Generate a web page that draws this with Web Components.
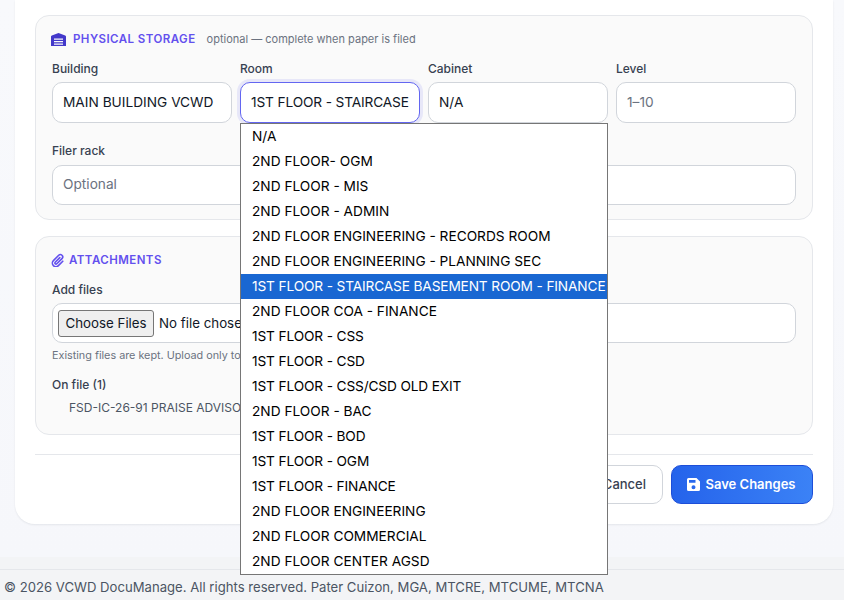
<!DOCTYPE html>
<html>
<head>
<meta charset="utf-8">
<title>Edit document</title>
<style>
  html, body { margin: 0; height: 600px; overflow: hidden; }
  body { font-family: Inter, "Liberation Sans", sans-serif; background: #f9fafb; }
</style>
</head>
<body>
<app-shell>
  <edit-card>
    <form-section heading="PHYSICAL STORAGE" note="optional — complete when paper is filed" icon="warehouse">
      <div style="display:grid;grid-template-columns:repeat(4,minmax(0,1fr));gap:8px;">
        <form-field label="Building" value="MAIN BUILDING VCWD"></form-field>
        <div style="position:relative">
          <form-field label="Room" value="1ST FLOOR - STAIRCASE" focused></form-field>
          <room-menu selected="6"></room-menu>
        </div>
        <form-field label="Cabinet" value="N/A"></form-field>
        <form-field label="Level" placeholder="1–10"></form-field>
      </div>
      <div style="margin-top:19px">
        <form-field label="Filer rack" placeholder="Optional" short></form-field>
      </div>
    </form-section>
    <form-section heading="ATTACHMENTS" icon="clip" style="margin-top:16px">
      <file-field label="Add files"></file-field>
      <div style="font-size:10.800px;color:#6b7280;margin-top:6px;line-height:14px;white-space:nowrap">Existing files are kept. Upload only to</div>
      <div style="font-size:12px;font-weight:500;color:#374151;margin-top:14px;line-height:16px">On file (1)</div>
      <div style="font-size:12px;color:#4b5563;margin:7px 0 4px 17px;line-height:16px;white-space:nowrap">FSD-IC-26-91 PRAISE ADVISO</div>
    </form-section>
    <form-actions></form-actions>
  </edit-card>
  <page-footer>© 2026 VCWD DocuManage. All rights reserved. Pater Cuizon, MGA, MTCRE, MTCUME, MTCNA</page-footer>
</app-shell>

<script>
const ICONS = {
  warehouse: `<svg width="15" height="13" viewBox="0 0 15 13"><path fill="#4338ca" fill-rule="evenodd" d="M7.500 0 .8 2.400C.3 2.600 0 3 0 3.500V13h15V3.500c0-.5-.3-.9-.8-1.100L7.500 0zM3 5.500h9v1.300H3zM3 8h9v1.300H3zM3 10.500h9v1.300H3z"/></svg>`,
  clip: `<svg width="13" height="14" viewBox="0 0 13 14" fill="none" stroke="#6350ee" stroke-width="1.600" stroke-linecap="round"><path d="M8.800 4.600 4.200 9.200a1.100 1.100 0 0 0 1.600 1.600L11 5.600a2.300 2.300 0 0 0-3.300-3.300L2.400 7.600a3.500 3.500 0 0 0 5 5L11.800 8.200"/></svg>`
};

// outer page, fills the window and keeps the footer at the bottom
class AppShell extends HTMLElement {
  constructor() {
    super();
    this.attachShadow({ mode: "open" }).innerHTML = `
      <style>
        :host { display: flex; flex-direction: column; height: 600px; }
        .main { flex: 1; min-height: 0; padding: 0 11px 0 15px; background: linear-gradient(#f8f9fc, #f6f7fb); }
        .strip { height: 12px; background: #f3f4f6; }
      </style>
      <div class="main"><slot></slot></div>
      <div class="strip"></div>
      <slot name="footer"></slot>`;
  }
  connectedCallback() {
    const f = this.querySelector("page-footer");
    if (f) f.slot = "footer";
  }
}

class EditCard extends HTMLElement {
  constructor() {
    super();
    this.attachShadow({ mode: "open" }).innerHTML = `
      <style>
        :host { display: block; background: #fff; border-radius: 0 0 20px 20px; padding: 15px 20px 20px; box-shadow: 0 1px 2px rgba(15,23,42,.08); }
      </style>
      <slot></slot>`;
  }
}

class FormSection extends HTMLElement {
  constructor() {
    super();
    const note = this.getAttribute("note");
    const icon = this.getAttribute("icon");
    this.attachShadow({ mode: "open" }).innerHTML = `
      <style>
        :host { display: block; background: #fafafa; border: 1px solid #e5e7eb; border-radius: 14px; padding: 15px 16px 14px; }
        .head { display: flex; align-items: center; height: 16px; margin-bottom: 13px; }
        .icon { display: flex; margin-right: ${icon === "clip" ? 5 : 7}px; margin-left: -1px; }
        .title { font-size: 11.500px; font-weight: 600; letter-spacing: .45px; color: #6350ee; }
        .note { font-size: 11px; color: #6b7280; margin-left: 11px; }
      </style>
      <div class="head">
        <span class="icon">${ICONS[icon] || ""}</span>
        <span class="title">${this.getAttribute("heading") || ""}</span>
        ${note ? `<span class="note">${note}</span>` : ""}
      </div>
      <slot></slot>`;
  }
}

class FormField extends HTMLElement {
  constructor() {
    super();
    const value = this.getAttribute("value");
    const focused = this.hasAttribute("focused");
    const short = this.hasAttribute("short");
    this.attachShadow({ mode: "open" }).innerHTML = `
      <style>
        :host { display: block; }
        label { display: block; font-size: 12px; font-weight: 500; color: #374151; line-height: 16px; padding-top: 1px; margin-bottom: ${short ? 6 : 5}px; }
        .box { box-sizing: border-box; height: ${short ? 40 : 41}px; display: flex; align-items: center; padding: 0 8px 2px 10px; background: #fff;
               border: 1px solid #d1d5db; border-radius: 10px; font-size: 13.700px; color: #111827; white-space: nowrap; }
        .box.focus { border-color: #6366f1; box-shadow: 0 0 0 3px rgba(99,102,241,.12); letter-spacing: -.14px; }
        .ph { color: #6b7280; }
      </style>
      <label>${this.getAttribute("label") || ""}</label>
      <div class="box ${focused ? "focus" : ""}">
        <span class="${value ? "" : "ph"}">${value || this.getAttribute("placeholder") || ""}</span>
      </div>`;
  }
}

class FileField extends HTMLElement {
  constructor() {
    super();
    this.attachShadow({ mode: "open" }).innerHTML = `
      <style>
        :host { display: block; }
        label { display: block; font-size: 12px; font-weight: 500; color: #374151; line-height: 16px; padding-top: 1px; margin-bottom: 5px; }
        .box { box-sizing: border-box; height: 40px; display: flex; align-items: center; padding: 0 5px; background: #fff;
               border: 1px solid #d1d5db; border-radius: 10px; font-size: 13.300px; color: #111827; }
        .btn { box-sizing: border-box; height: 27px; display: flex; align-items: center; padding: 0 6.500px; background: #efefef;
               border: 1px solid #767676; border-radius: 3px; margin-right: 5px; }
      </style>
      <label>${this.getAttribute("label") || ""}</label>
      <div class="box"><span class="btn">Choose Files</span><span>No file chose</span></div>`;
  }
}

// open select list, drawn over the fields below it
class RoomMenu extends HTMLElement {
  constructor() {
    super();
    const rooms = ["N/A", "2ND FLOOR- OGM", "2ND FLOOR - MIS", "2ND FLOOR - ADMIN", "2ND FLOOR ENGINEERING - RECORDS ROOM",
      "2ND FLOOR ENGINEERING - PLANNING SEC", "1ST FLOOR - STAIRCASE BASEMENT ROOM - FINANCE", "2ND FLOOR COA - FINANCE",
      "1ST FLOOR - CSS", "1ST FLOOR - CSD", "1ST FLOOR - CSS/CSD OLD EXIT", "2ND FLOOR - BAC", "1ST FLOOR - BOD",
      "1ST FLOOR - OGM", "1ST FLOOR - FINANCE", "2ND FLOOR ENGINEERING", "2ND FLOOR COMMERCIAL", "2ND FLOOR CENTER AGSD"];
    const sel = Number(this.getAttribute("selected"));
    this.attachShadow({ mode: "open" }).innerHTML = `
      <style>
        :host { position: absolute; left: 0; top: 63px; width: 368px; z-index: 5; display: block; box-sizing: border-box;
                background: #fff; border: 1px solid #767676; }
        div { height: 25px; line-height: 25px; padding-left: 11px; font-size: 13.700px; color: #000; white-space: nowrap; }
        .tight { letter-spacing: -.14px; }
        .on { background: #1967d2; color: #fff; }
      </style>
      ${rooms.map((r, i) => `<div class="${i === sel ? "on" : ""} ${r.startsWith("1ST") ? "tight" : ""}">${r}</div>`).join("")}`;
  }
}

class FormActions extends HTMLElement {
  constructor() {
    super();
    this.attachShadow({ mode: "open" }).innerHTML = `
      <style>
        :host { display: flex; justify-content: flex-end; gap: 8px; margin-top: 19px; padding-top: 10px; border-top: 1px solid #e5e7eb; }
        .b { box-sizing: border-box; height: 39px; display: flex; align-items: center; border-radius: 10px; font-size: 13px; font-weight: 500; padding-bottom: 1px; }
        .cancel { padding-left: 16px; padding-right: 16px; background: #fff; border: 1px solid #d1d5db; color: #374151; }
        .save { width: 142px; justify-content: center; gap: 6px; padding-right: 2px; background: linear-gradient(90deg, #2563eb, #3b82f6); border: 1px solid #1d4ed8; color: #fff; font-weight: 600; }
      </style>
      <div class="b cancel">Cancel</div>
      <div class="b save">
        <svg width="13" height="13" viewBox="0 0 13 13"><path fill="#fff" fill-rule="evenodd" d="M1.500 0h8L13 3.500v8a1.500 1.500 0 0 1-1.500 1.500h-10A1.500 1.500 0 0 1 0 11.500v-10A1.500 1.500 0 0 1 1.500 0zM2 2v2.800h6.500V2H2zm4.500 5.300a2 2 0 1 0 0 4 2 2 0 0 0 0-4z"/></svg>
        Save Changes
      </div>`;
  }
}

class PageFooter extends HTMLElement {
  constructor() {
    super();
    this.attachShadow({ mode: "open" }).innerHTML = `
      <style>
        :host { display: block; box-sizing: border-box; height: 31px; line-height: 34px; padding-left: 4px; background: #f3f4f6;
                border-top: 1px solid #e5e7eb; font-size: 13.130px; color: #4b5563; }
      </style>
      <slot></slot>`;
  }
}

customElements.define("app-shell", AppShell);
customElements.define("edit-card", EditCard);
customElements.define("form-section", FormSection);
customElements.define("form-field", FormField);
customElements.define("file-field", FileField);
customElements.define("room-menu", RoomMenu);
customElements.define("form-actions", FormActions);
customElements.define("page-footer", PageFooter);
</script>
</body>
</html>
